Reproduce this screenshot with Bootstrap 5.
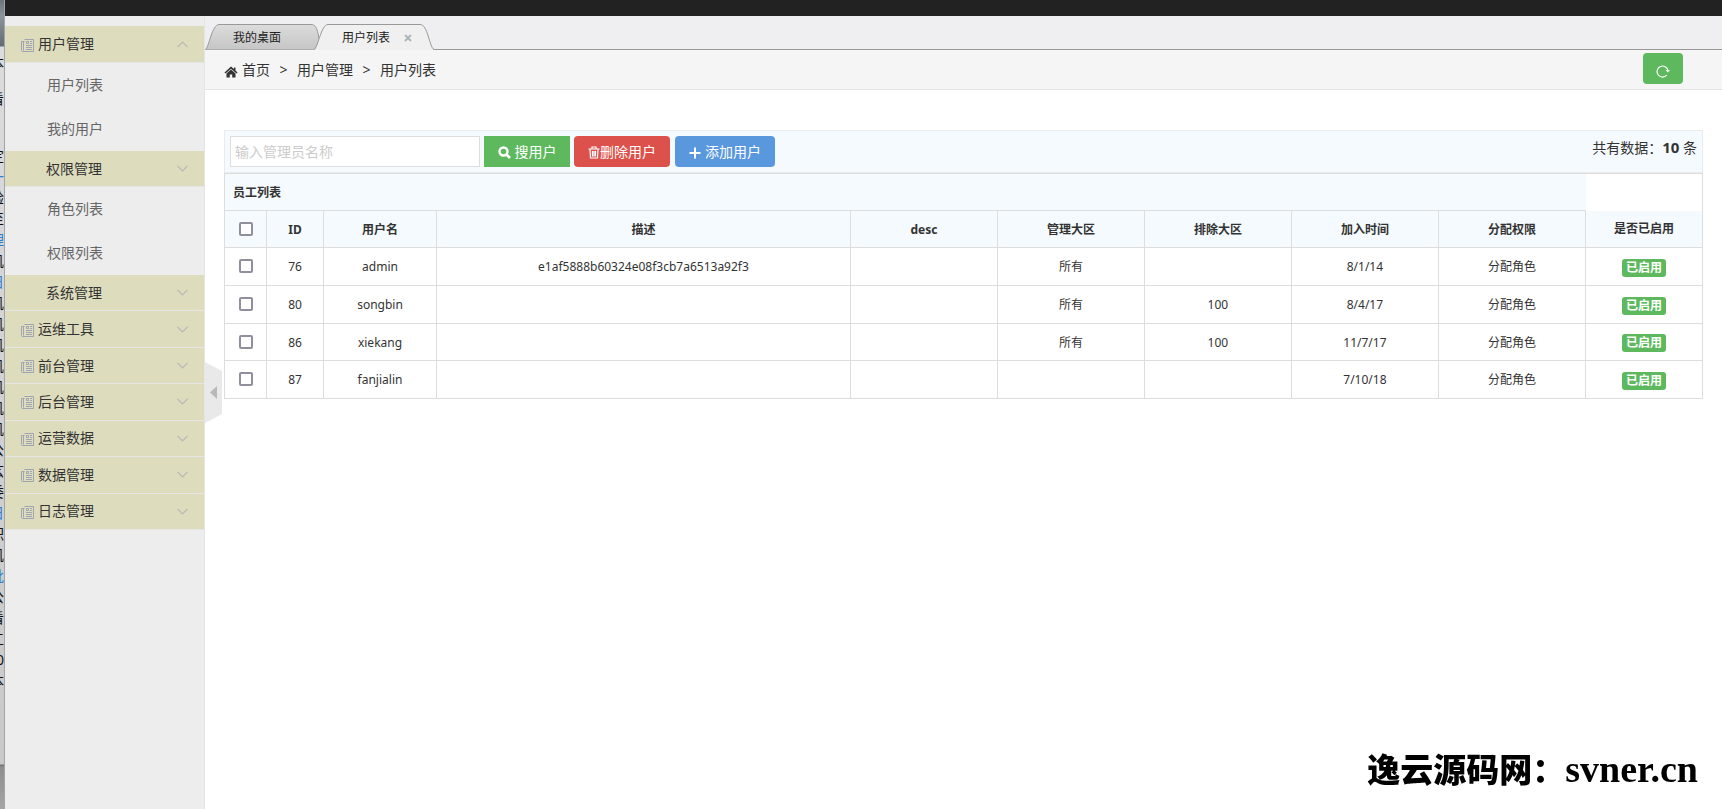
<!DOCTYPE html>
<html lang="zh-CN">
<head>
<meta charset="utf-8">
<meta name="viewport" content="width=device-width, initial-scale=1">
<title>用户列表</title>
<link href="https://cdn.jsdelivr.net/npm/bootstrap@5.3.0/dist/css/bootstrap.min.css" rel="stylesheet">
<style>
body{font-family:"Noto Sans","Noto Sans CJK SC",sans-serif;font-size:14px;line-height:20px;color:#333;background:#fff}
a{color:inherit;text-decoration:none}
.desk{width:5px;background:linear-gradient(#6b737c 0,#8b939b 16px,#636b73 46px,#dcdcde 47px,#cfcfd1 60%,#c9c9c9 764px,#6f6f6f 765px,#8e8e8e 767px,#a5a5a5);border-right:1px solid #a4a4a6;color:#111;padding-top:52px}
.desk-line{height:21px;line-height:21px;width:14px;margin-left:-10px}
.desk-line.far{height:36px}
.desk-line.blue-ink{color:#2a7fd0}
.topbar{height:16px;background:#222}
.side{width:200px;background:#ededed;border-right:1px solid #e5e5e5;padding-top:10px;position:relative}
.side-head{width:100%;min-height:36px;background:#dddcbd;border:0;border-bottom:1px solid #e5e5e5;color:#333;padding:0 16px;text-align:left}
.side-head.nested{padding-left:41px}
.side-head.first{min-height:37px}
.side-head .news{margin:2px 4px 0 0}
.side-link{display:block;padding:12px 0 12px 42px;color:#666}
.side-tail{height:255px;grid-auto-rows:1fr}
.fold{position:absolute;left:100%;top:346px;width:18px;height:61px;padding:0;border:0;background:none;z-index:2}
.tabs{height:34px;background:#efeef0;border-bottom:1px solid #999}
.tab{position:relative;border:0;background:none;height:26px;padding:2px 0 0;font-size:12px;color:#222;margin-bottom:-1px}
.tab svg.shape{position:absolute;left:0;top:0}
.tab span{position:relative}
.tab-a{width:116px;text-align:left;padding-left:28px}
.tab-b{width:122px;text-align:left;padding-left:29px;margin-left:-8px}
.tab-b .x{position:absolute;left:91px;top:10px}
.crumbs{height:40px;background:#f5f5f5;border-bottom:1px solid #e5e5e5;padding:0 39px 0 19px}
.crumbs .sep{width:27px;text-align:center}
.btn-h{height:31px;padding:0;font-size:14px;line-height:20px;color:#fff;border:0;border-radius:4px;display:inline-flex;align-items:center;justify-content:center}
.btn-h svg{margin-top:2px}
.green{background:#5eb95e}.red{background:#dd514c}.blue{background:#5a98de}
.w-ref{width:40px;margin-bottom:2px}.w-s{width:86px;border-radius:0}.w-d{width:96px}.w-a{width:100px;margin-left:5px}
.inner{padding:40px 19px 0}
.tools{background:#f5fafe;border:1px solid #e9ebec;height:43px;padding:0 5px}
.tools strong{font-size:15px}
.find{width:250px;height:31px;border:1px solid #ddd;border-radius:0;padding:4px;font-size:14px;background:#fff}
.find::placeholder{color:#ccc;opacity:1}
.grid-t{table-layout:fixed;width:100%;border-collapse:collapse;font-size:12px;text-align:center}
.grid-t th,.grid-t td{border:1px solid #ddd;height:38px;padding:1px 8px 0;line-height:20px}
.grid-t thead th{background:#f5fafe;height:37px;text-align:center}
.grid-t thead th.title{text-align:left;border-right:0}
.grid-t thead td{border-left:0;border-bottom:0;height:37px}
.grid-t thead th.last{border-top:0}
.grid-t tr.low td{height:37px}
.tick{appearance:none;width:14px;height:14px;border:2px solid #8f8f9d;border-radius:2px;background:#fff;margin:0 auto 2px;display:block}
.tick:checked{background:#8f8f9d}
.state{display:inline-block;background:#5eb95e;color:#fff;font-weight:700;border-radius:3px;line-height:18px;width:44px;height:18px;vertical-align:middle}
.site-name{font:900 33px/40px "Noto Sans CJK SC",sans-serif;color:#000;position:fixed;right:24px;bottom:20px}
.site-name span{font-family:"Liberation Serif",serif;font-weight:700;font-size:38px}
</style>
</head>
<body>
<svg width="0" height="0" class="position-absolute">
<defs>
<symbol id="news" viewBox="0 0 13 13"><path d="M3.500 .5h9v12h-11a1 1 0 0 1-1-1v-9h3M2.500 2.500v9" fill="none" stroke="#9fa4b0"/><path d="M5.500 2.500h2v2h-2zM9 2.500h2M9 4.500h2M5 6.500h6M5 8.500h6M5 10.500h6" fill="none" stroke="#9fa4b0"/></symbol>
<symbol id="down" viewBox="0 0 11 7"><path d="M.5 .8 5.500 5.800 10.500 .8" fill="none" stroke="#b8b8b8" stroke-width="1.200"/></symbol>
<symbol id="up" viewBox="0 0 11 7"><path d="M.5 6.200 5.500 1.200 10.500 6.200" fill="none" stroke="#b8b8b8" stroke-width="1.200"/></symbol>
</defs>
</svg>
<div class="d-flex min-vh-100">
  <div class="desk flex-shrink-0 overflow-hidden" aria-hidden="true">
    <div class="desk-line far">本</div><div class="desk-line far">看</div><div class="desk-line"></div>
    <div class="desk-line">定</div><div class="desk-line blue-ink">一</div><div class="desk-line">验</div><div class="desk-line">至</div><div class="desk-line blue-ink">理</div><div class="desk-line">玑</div><div class="desk-line blue-ink">日</div>
    <div class="desk-line">玑</div><div class="desk-line">玑</div><div class="desk-line">玑</div><div class="desk-line">玑</div><div class="desk-line">玑</div><div class="desk-line">玑</div><div class="desk-line">玑</div>
    <div class="desk-line">公</div><div class="desk-line">玄</div><div class="desk-line">委</div><div class="desk-line blue-ink">日</div><div class="desk-line">积</div><div class="desk-line">玑</div><div class="desk-line blue-ink">批</div><div class="desk-line">公</div><div class="desk-line">看</div><div class="desk-line">工</div><div class="desk-line text-end">0</div><div class="desk-line">本</div>
  </div>
  <div class="flex-grow-1 d-flex flex-column">
    <header class="topbar"></header>
    <div class="d-flex flex-grow-1">
      <aside class="side flex-shrink-0">
        <button class="side-head first d-flex align-items-center"><svg class="news" width="13" height="13"><use href="#news"/></svg>用户管理<svg class="ms-auto" width="11" height="7"><use href="#up"/></svg></button>
        <nav><a class="side-link" href="#">用户列表</a><a class="side-link" href="#">我的用户</a></nav>
        <button class="side-head nested d-flex align-items-center">权限管理<svg class="ms-auto" width="11" height="7"><use href="#down"/></svg></button>
        <nav><a class="side-link" href="#">角色列表</a><a class="side-link" href="#">权限列表</a></nav>
        <div class="side-tail d-grid">
          <button class="side-head nested d-flex align-items-center">系统管理<svg class="ms-auto" width="11" height="7"><use href="#down"/></svg></button>
          <button class="side-head d-flex align-items-center"><svg class="news" width="13" height="13"><use href="#news"/></svg>运维工具<svg class="ms-auto" width="11" height="7"><use href="#down"/></svg></button>
          <button class="side-head d-flex align-items-center"><svg class="news" width="13" height="13"><use href="#news"/></svg>前台管理<svg class="ms-auto" width="11" height="7"><use href="#down"/></svg></button>
          <button class="side-head d-flex align-items-center"><svg class="news" width="13" height="13"><use href="#news"/></svg>后台管理<svg class="ms-auto" width="11" height="7"><use href="#down"/></svg></button>
          <button class="side-head d-flex align-items-center"><svg class="news" width="13" height="13"><use href="#news"/></svg>运营数据<svg class="ms-auto" width="11" height="7"><use href="#down"/></svg></button>
          <button class="side-head d-flex align-items-center"><svg class="news" width="13" height="13"><use href="#news"/></svg>数据管理<svg class="ms-auto" width="11" height="7"><use href="#down"/></svg></button>
          <button class="side-head d-flex align-items-center"><svg class="news" width="13" height="13"><use href="#news"/></svg>日志管理<svg class="ms-auto" width="11" height="7"><use href="#down"/></svg></button>
        </div>
        <button class="fold" aria-label="收起菜单"><svg class="d-block" width="18" height="61"><path d="M1 0 18 9V52L1 61z" fill="#e9e9e9"/><path d="M6 30.500 13 24v13z" fill="#b8b8b8"/></svg></button>
      </aside>
      <main class="flex-grow-1">
        <div class="tabs d-flex align-items-end">
          <button class="tab tab-a"><svg class="shape" width="116" height="26"><defs><linearGradient id="ga" x2="0" y2="1"><stop stop-color="#dcdcdc"/><stop offset="1" stop-color="#c6c6c6"/></linearGradient></defs><path d="M.5 25.500C4 23 7 .5 14 .5H106c7 0 7 10 10 25" fill="url(#ga)" stroke="#999"/></svg><span>我的桌面</span></button>
          <button class="tab tab-b"><svg class="shape" width="122" height="26"><path d="M1 26C5 24 8 .5 15 .5h92c8 0 9 23 14 25.500" fill="#f0f0f0"/><path d="M1 25.500C5 24 8 .5 15 .5h92c8 0 9 22 14 25" fill="none" stroke="#999"/></svg><span>用户列表</span><svg class="x" width="8" height="8"><path d="m1 1 6 6M7 1 1 7" stroke="#aab2b5" stroke-width="1.800"/></svg></button>
        </div>
        <div class="crumbs d-flex align-items-center">
          <svg class="me-1 mt-1" width="14" height="12" viewBox="0 0 14 12"><path d="M7 .5 .5 6.500l1 1L7 2.800l5.500 4.700 1-1-2-2V1.500H10v1.500z" fill="#333"/><path d="M7 3.500 2.500 7.500V11.500h3.300V8.500h2.400v3h3.300V7.500z" fill="#333"/></svg>
          <a href="#">首页</a><span class="sep">&gt;</span><a href="#">用户管理</a><span class="sep">&gt;</span><a href="#">用户列表</a>
          <button class="btn-h w-ref green ms-auto" aria-label="刷新"><svg class="mt-1" width="14" height="14" viewBox="0 0 14 14"><path d="M10.700 11.200A5.500 5.500 0 1 1 12 6.500" fill="none" stroke="#fff" stroke-width="1.200"/><path d="M9.500 6h4.500L11.800 8.500z" fill="#fff"/></svg></button>
        </div>
        <div class="inner">
          <div class="tools d-flex align-items-center">
            <input class="find" type="text" placeholder="输入管理员名称" aria-label="输入管理员名称">
            <button class="btn-h w-s green ms-1"><svg class="me-1" width="13" height="13" viewBox="0 0 13 13"><circle cx="5.500" cy="5.500" r="4" fill="none" stroke="#fff" stroke-width="2.400"/><path d="m8.500 8.500 3.500 3.500" stroke="#fff" stroke-width="2.600"/></svg>搜用户</button>
            <button class="btn-h w-d red ms-1"><svg width="12" height="13" viewBox="0 0 12 13"><path d="M.5 3h11M4 2.500V1h4v1.500M2 3.500l.5 8.500h7L10 3.500M4.500 5v5.500M6 5v5.500M7.500 5v5.500" fill="none" stroke="#fff" stroke-width="1.200"/></svg>删除用户</button>
            <button class="btn-h w-a blue"><svg class="me-1" width="12" height="12"><path d="M6 .5v11M.5 6h11" stroke="#fff" stroke-width="2"/></svg>添加用户</button>
            <div class="ms-auto pb-2">共有数据：<strong>10</strong> 条</div>
          </div>
          <table class="grid-t">
            <colgroup><col style="width:42px"><col style="width:57px"><col style="width:113px"><col><col style="width:147px"><col style="width:147px"><col style="width:147px"><col style="width:147px"><col style="width:147px"><col style="width:117px"></colgroup>
            <thead>
              <tr><th class="title" colspan="9">员工列表</th><td></td></tr>
              <tr><th><input class="tick" type="checkbox" aria-label="全选"></th><th>ID</th><th>用户名</th><th>描述</th><th>desc</th><th>管理大区</th><th>排除大区</th><th>加入时间</th><th>分配权限</th><th class="last">是否已启用</th></tr>
            </thead>
            <tbody>
              <tr><td><input class="tick" type="checkbox" aria-label="76"></td><td>76</td><td>admin</td><td>e1af5888b60324e08f3cb7a6513a92f3</td><td></td><td>所有</td><td></td><td>8/1/14</td><td><a href="#">分配角色</a></td><td><span class="state">已启用</span></td></tr>
              <tr><td><input class="tick" type="checkbox" aria-label="80"></td><td>80</td><td>songbin</td><td></td><td></td><td>所有</td><td>100</td><td>8/4/17</td><td><a href="#">分配角色</a></td><td><span class="state">已启用</span></td></tr>
              <tr class="low"><td><input class="tick" type="checkbox" aria-label="86"></td><td>86</td><td>xiekang</td><td></td><td></td><td>所有</td><td>100</td><td>11/7/17</td><td><a href="#">分配角色</a></td><td><span class="state">已启用</span></td></tr>
              <tr><td><input class="tick" type="checkbox" aria-label="87"></td><td>87</td><td>fanjialin</td><td></td><td></td><td></td><td></td><td>7/10/18</td><td><a href="#">分配角色</a></td><td><span class="state">已启用</span></td></tr>
            </tbody>
          </table>
        </div>
      </main>
    </div>
  </div>
</div>
<div class="site-name">逸云源码网：<span>svner.cn</span></div>
<script src="https://cdn.jsdelivr.net/npm/bootstrap@5.3.0/dist/js/bootstrap.bundle.min.js"></script>
</body>
</html>
